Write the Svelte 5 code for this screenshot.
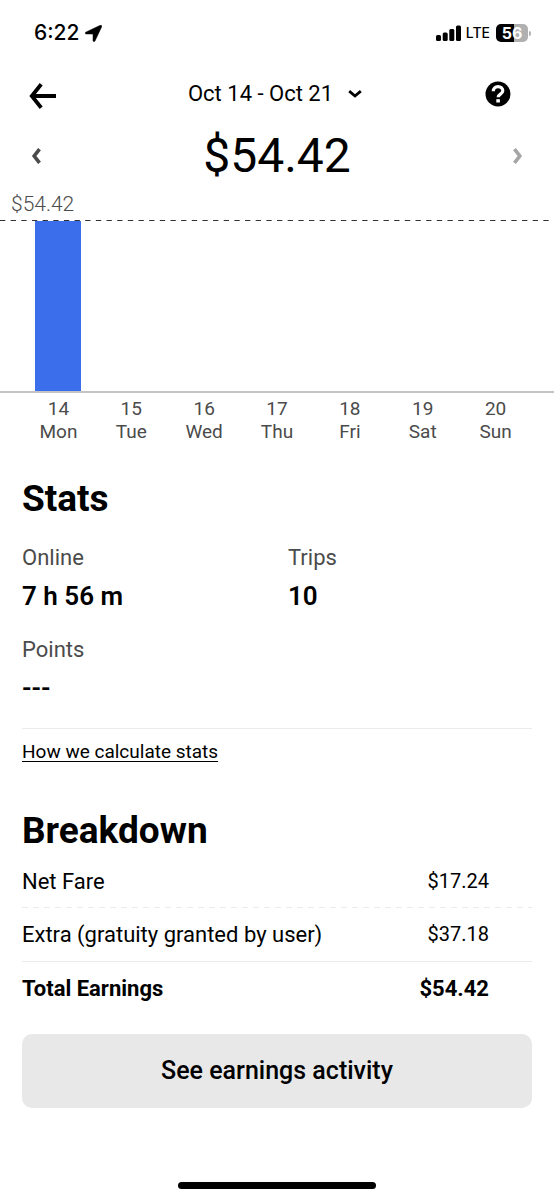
<script>
  const days = [
    { date: 14, name: 'Mon', value: 54.42 },
    { date: 15, name: 'Tue', value: 0 },
    { date: 16, name: 'Wed', value: 0 },
    { date: 17, name: 'Thu', value: 0 },
    { date: 18, name: 'Fri', value: 0 },
    { date: 19, name: 'Sat', value: 0 },
    { date: 20, name: 'Sun', value: 0 }
  ];
  const max = Math.max(...days.map((d) => d.value));

  const stats = [
    { label: 'Online', value: '7 h 56 m' },
    { label: 'Trips', value: '10' },
    { label: 'Points', value: '---' }
  ];

  const rows = [
    { label: 'Net Fare', value: '$17.24', kind: 'dashed' },
    { label: 'Extra (gratuity granted by user)', value: '$37.18', kind: 'solid' },
    { label: 'Total Earnings', value: '$54.42', kind: 'total' }
  ];
</script>

<div class="page">
  <div class="status">
    <div class="status-left">
      <span class="clock">6:22</span>
      <svg width="17" height="17" viewBox="0 0 17 17" aria-hidden="true">
        <path d="M15.300.300.700 7.200C-.300 7.700 0 9 1.100 9h6.300c.400 0 .600.200.600.600v5.900c0 1.200 1.500 1.500 2 .400L16.700 1.700c.400-.900-.500-1.800-1.400-1.400Z" stroke="#000" stroke-width=".500" />
      </svg>
    </div>
    <div class="status-right">
      <svg width="26" height="17" viewBox="0 0 26 17" aria-hidden="true">
        <rect x="0" y="10" width="5" height="6" rx="1.500" />
        <rect x="6.700" y="7.500" width="5" height="8.500" rx="1.500" />
        <rect x="13.300" y="4" width="5" height="12" rx="1.500" />
        <rect x="20" y="0.500" width="5" height="15.500" rx="1.500" />
      </svg>
      <span class="network">LTE</span>
      <span class="battery"><span class="cell">56</span><span class="nub"></span></span>
    </div>
  </div>

  <header>
    <button class="icon start" aria-label="Back">
      <svg width="28" height="26" viewBox="0 0 28 26" aria-hidden="true">
        <path d="M27 13H3M12.200 1.200 2.800 13l9.400 11.800" fill="none" stroke="#000" stroke-width="3.800" />
      </svg>
    </button>
    <button class="range">
      Oct 14 - Oct 21
      <svg width="14" height="10" viewBox="0 0 14 10" aria-hidden="true">
        <path d="M1.200 2.200 7 7l5.800-4.800" fill="none" stroke="#000" stroke-width="2.800" />
      </svg>
    </button>
    <button class="icon end" aria-label="Help">
      <svg width="26" height="26" viewBox="0 0 26 26" aria-hidden="true">
        <circle cx="13" cy="13" r="12.500" />
        <path d="M8.300 10.300C8.300 7.400 10.300 5.600 13 5.600s4.800 1.700 4.800 4.200c0 3.400-4.600 3.300-4.600 6.400" fill="none" stroke="#fff" stroke-width="3.200" />
        <rect x="11.300" y="18.200" width="3.600" height="3.300" fill="#fff" />
      </svg>
    </button>
  </header>

  <div class="week">
    <button class="icon start" aria-label="Previous week">
      <svg width="10" height="16" viewBox="0 0 10 16" aria-hidden="true">
        <path d="M8.500 1.200 3.200 8l5.300 6.800" fill="none" stroke="#4b4b4b" stroke-width="3.600" />
      </svg>
    </button>
    <h1>$54.42</h1>
    <button class="icon end" aria-label="Next week" disabled>
      <svg width="10" height="16" viewBox="0 0 10 16" aria-hidden="true">
        <path d="M1.500 1.200 6.800 8l-5.300 6.800" fill="none" stroke="#a6a6a6" stroke-width="3.600" />
      </svg>
    </button>
  </div>

  <section class="chart" aria-label="Earnings by day">
    <div class="peak">$54.42</div>
    <svg class="guide" width="100%" height="1" aria-hidden="true">
      <line x1="0" y1=".5" x2="100%" y2=".5" pathLength="104" stroke="#333" stroke-width="1" stroke-dasharray="1 1" />
    </svg>
    <div class="plot">
      {#each days as day}
        <div class="bar" style:height="{(day.value / max) * 100}%"></div>
      {/each}
    </div>
    <div class="labels">
      {#each days as day}
        <div>{day.date}<br />{day.name}</div>
      {/each}
    </div>
  </section>

  <section class="stats" id="stats">
    <h2>Stats</h2>
    <dl>
      {#each stats as stat}
        <div>
          <dt>{stat.label}</dt>
          <dd>{stat.value}</dd>
        </div>
      {/each}
    </dl>
    <div class="more"><a href="#stats">How we calculate stats</a></div>
  </section>

  <section class="breakdown">
    <h2>Breakdown</h2>
    <table>
      <tbody>
        {#each rows as row}
          <tr class={row.kind}>
            <th scope="row">{row.label}</th>
            <td>{row.value}</td>
          </tr>
        {/each}
      </tbody>
    </table>
    <button class="activity">See earnings activity</button>
  </section>

  <div class="home"></div>
</div>

<style>
  :global(body) {
    margin: 0;
    background: #fff;
  }

  .page {
    display: flex;
    flex-direction: column;
    min-height: 100vh;
    color: #000;
    font: 400 21px/28px Roboto, sans-serif;
  }

  button {
    margin: 0;
    padding: 0;
    border: 0;
    background: none;
    color: inherit;
    font: inherit;
  }

  svg {
    display: block;
  }

  .status {
    display: flex;
    align-items: center;
    justify-content: space-between;
    height: 66px;
    padding: 0 23px 0 34px;
    font-family: Inter, sans-serif;
  }

  .status-left,
  .status-right {
    display: flex;
    align-items: center;
  }

  .status-left {
    gap: 6px;
  }

  .status-right {
    gap: 4px;
  }

  .clock {
    font-size: 21px;
    font-weight: 500;
  }

  .network {
    font-size: 14px;
    font-weight: 500;
  }

  .battery {
    display: flex;
    align-items: center;
    gap: 1px;
    margin-left: 2px;
  }

  .cell {
    width: 32px;
    border-radius: 5px;
    background: linear-gradient(90deg, #000 56%, #b0b0b0 56%);
    color: #fff;
    font-size: 16px;
    font-weight: 700;
    line-height: 18px;
    text-align: center;
  }

  .nub {
    width: 2px;
    height: 5px;
    border-radius: 0 2px 2px 0;
    background: #b0b0b0;
  }

  header,
  .week {
    display: grid;
    grid-template-columns: 1fr auto 1fr;
    align-items: center;
  }

  header {
    height: 56px;
    padding: 0 29px;
  }

  header .start {
    padding-top: 4px;
  }

  header .end {
    padding-right: 14px;
  }

  .week {
    height: 68px;
    padding: 0 31px;
  }

  .start {
    justify-self: start;
  }

  .end {
    justify-self: end;
  }

  .range {
    display: flex;
    align-items: center;
    gap: 15px;
    padding-right: 4px;
    font-size: 22px;
  }

  h1 {
    margin: 0;
    font-size: 48px;
    font-weight: 400;
    line-height: 56px;
  }

  .peak {
    padding-left: 11px;
    color: #4b4b4b;
    font-weight: 300;
  }

  .guide {
    margin-top: 2px;
  }

  .plot,
  .labels {
    display: grid;
    grid-template-columns: repeat(7, 1fr);
    padding: 0 22px;
  }

  .plot {
    height: 170px;
    align-items: end;
    border-bottom: 2px solid #c4c4c4;
  }

  .bar {
    width: 46px;
    justify-self: center;
    background: #3b6eeb;
  }

  .labels {
    margin-top: 4px;
    color: #4b4b4b;
    font-size: 19px;
    line-height: 23px;
    text-align: center;
  }

  .stats,
  .breakdown {
    padding: 0 22px;
  }

  h2 {
    margin: 0;
    font-size: 37px;
    font-weight: 700;
    line-height: 44px;
  }

  .stats {
    padding-top: 34px;
  }

  dl {
    display: grid;
    grid-template-columns: 1fr 1fr;
    gap: 24px 22px;
    margin: 23px 0 0;
  }

  dt {
    color: #4b4b4b;
    font-size: 22px;
    line-height: 28px;
  }

  dd {
    margin: 8px 0 0;
    font-size: 26px;
    font-weight: 600;
    line-height: 32px;
  }

  .more {
    margin-top: 24px;
    padding-top: 8px;
    border-top: 1px solid #ebebeb;
  }

  a {
    color: inherit;
    font-size: 19px;
    text-underline-offset: 3px;
    text-decoration-thickness: 1px;
  }

  .breakdown {
    padding-top: 43px;
  }

  table {
    width: 100%;
    margin-top: 2px;
    border-collapse: collapse;
  }

  th,
  td {
    padding: 12px 0;
    font-size: 22px;
    font-weight: 400;
    line-height: 29px;
    text-align: left;
  }

  td {
    padding-right: 43px;
    font-size: 20px;
    text-align: right;
  }

  .dashed {
    background: repeating-linear-gradient(90deg, #ebebeb 0 6px, transparent 6px 11px) left bottom / 100% 1px no-repeat;
  }

  .solid {
    border-bottom: 1px solid #ebebeb;
  }

  .total th,
  .total td {
    font-size: 22px;
    font-weight: 700;
  }

  .activity {
    width: 100%;
    margin-top: 19px;
    padding: 22px;
    border-radius: 10px;
    background: #e8e8e8;
    font-size: 25px;
    font-weight: 500;
    line-height: 30px;
  }

  .home {
    width: 198px;
    height: 7px;
    margin: auto auto 11px;
    border-radius: 4px;
    background: #000;
  }
</style>
